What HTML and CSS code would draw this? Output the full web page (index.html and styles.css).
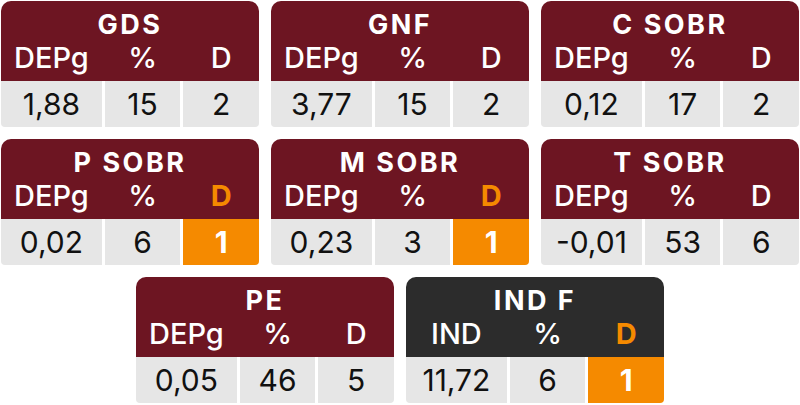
FILE: index.html
```html
<!DOCTYPE html>
<html lang="es">
<head>
<meta charset="utf-8">
<link rel="stylesheet" href="styles.css">
</head>
<body>
<div class="board">
  <div class="row">
    <div class="card">
      <div class="head"><div class="title">GDS</div>
        <div class="labels"><span>DEPg</span><span>%</span><span>D</span></div></div>
      <div class="vals"><span>1,88</span><span>15</span><span>2</span></div>
    </div>
    <div class="card">
      <div class="head"><div class="title">GNF</div>
        <div class="labels"><span>DEPg</span><span>%</span><span>D</span></div></div>
      <div class="vals"><span>3,77</span><span>15</span><span>2</span></div>
    </div>
    <div class="card">
      <div class="head"><div class="title">C SOBR</div>
        <div class="labels"><span>DEPg</span><span>%</span><span>D</span></div></div>
      <div class="vals"><span>0,12</span><span>17</span><span>2</span></div>
    </div>
  </div>
  <div class="row">
    <div class="card">
      <div class="head"><div class="title">P SOBR</div>
        <div class="labels"><span>DEPg</span><span>%</span><span class="hl">D</span></div></div>
      <div class="vals"><span>0,02</span><span>6</span><span class="hl">1</span></div>
    </div>
    <div class="card">
      <div class="head"><div class="title">M SOBR</div>
        <div class="labels"><span>DEPg</span><span>%</span><span class="hl">D</span></div></div>
      <div class="vals"><span>0,23</span><span>3</span><span class="hl">1</span></div>
    </div>
    <div class="card">
      <div class="head"><div class="title">T SOBR</div>
        <div class="labels"><span>DEPg</span><span>%</span><span>D</span></div></div>
      <div class="vals"><span>-0,01</span><span>53</span><span>6</span></div>
    </div>
  </div>
  <div class="row">
    <div class="card">
      <div class="head"><div class="title">PE</div>
        <div class="labels"><span>DEPg</span><span>%</span><span>D</span></div></div>
      <div class="vals"><span>0,05</span><span>46</span><span>5</span></div>
    </div>
    <div class="card dark">
      <div class="head"><div class="title">IND F</div>
        <div class="labels"><span>IND</span><span>%</span><span class="hl">D</span></div></div>
      <div class="vals"><span>11,72</span><span>6</span><span class="hl">1</span></div>
    </div>
  </div>
</div>
</body>
</html>
```
FILE: styles.css
```css
html, body {
  margin: 0;
  padding: 0;
  background: #ffffff;
}
body {
  font-family: "Inter", "Roboto", sans-serif;
}
.board {
  padding: 1px;
  display: flex;
  flex-direction: column;
  gap: 12px;
}
.row {
  display: flex;
  justify-content: center;
  gap: 12px;
}
.card {
  width: 258px;
  height: 126px;
  border-radius: 10px 10px 4px 4px;
  overflow: hidden;
  display: flex;
  flex-direction: column;
  background: #ffffff;
}
.head {
  background: #6d1522;
  color: #ffffff;
  height: 80px;
  padding-top: 5px;
  box-sizing: border-box;
}
.dark .head {
  background: #2c2c2c;
}
.title {
  height: 38px;
  line-height: 38px;
  text-align: center;
  font-weight: 700;
  font-size: 27px;
  letter-spacing: 2.5px;
}
.labels, .vals {
  display: grid;
  grid-template-columns: 4fr 3fr 3fr;
  column-gap: 3px;
  text-align: center;
}
.labels {
  height: 28px;
  line-height: 28px;
  font-size: 29px;
  font-weight: 500;
}
.labels .hl {
  color: #f58a00;
  font-weight: 700;
}
.vals {
  flex: 1;
  font-size: 30px;
  color: #111111;
}
.vals span {
  background: #e6e6e6;
  line-height: 46px;
}
.vals .hl {
  background: #f58a00;
  color: #ffffff;
  font-weight: 700;
}
```
